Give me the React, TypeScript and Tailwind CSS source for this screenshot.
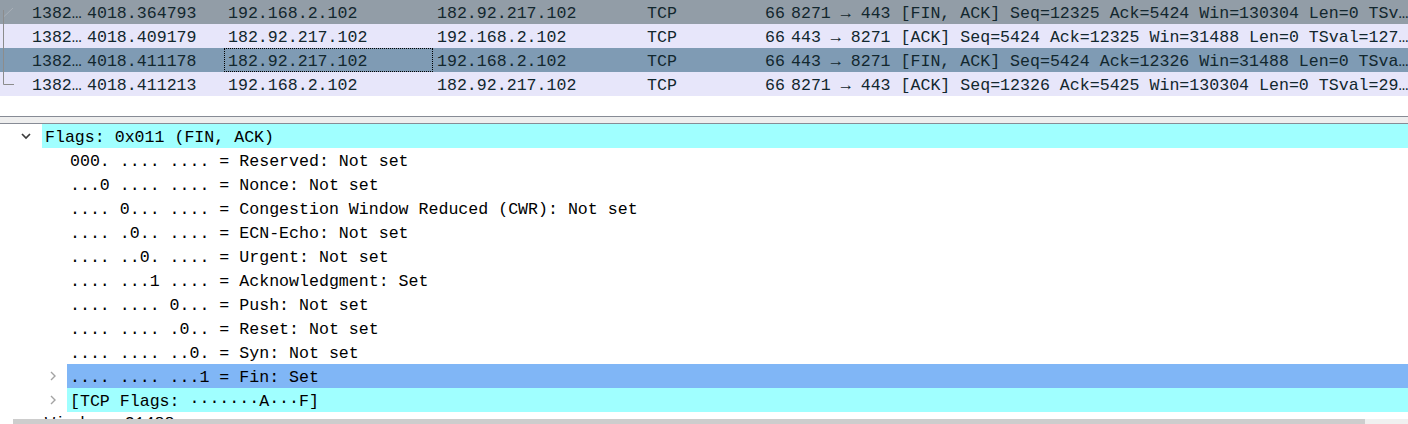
import React from "react";

// Packet list rows (bottom of a capture, TCP teardown)
interface PacketRow {
  no: string;
  time: string;
  src: string;
  dst: string;
  proto: string;
  len: string;
  info: string;
  bg: string;
  focused?: boolean;
}

const packets: PacketRow[] = [
  {
    no: "1382…",
    time: "4018.364793",
    src: "192.168.2.102",
    dst: "182.92.217.102",
    proto: "TCP",
    len: "66",
    info: "8271 → 443 [FIN, ACK] Seq=12325 Ack=5424 Win=130304 Len=0 TSv…",
    bg: "bg-[#929da7]",
  },
  {
    no: "1382…",
    time: "4018.409179",
    src: "182.92.217.102",
    dst: "192.168.2.102",
    proto: "TCP",
    len: "66",
    info: "443 → 8271 [ACK] Seq=5424 Ack=12325 Win=31488 Len=0 TSval=127…",
    bg: "bg-[#e7e6fa]",
  },
  {
    no: "1382…",
    time: "4018.411178",
    src: "182.92.217.102",
    dst: "192.168.2.102",
    proto: "TCP",
    len: "66",
    info: "443 → 8271 [FIN, ACK] Seq=5424 Ack=12326 Win=31488 Len=0 TSva…",
    bg: "bg-[#7f9bb4]",
    focused: true,
  },
  {
    no: "1382…",
    time: "4018.411213",
    src: "192.168.2.102",
    dst: "182.92.217.102",
    proto: "TCP",
    len: "66",
    info: "8271 → 443 [ACK] Seq=12326 Ack=5425 Win=130304 Len=0 TSval=29…",
    bg: "bg-[#e7e6fa]",
  },
];

// Flag bits shown under the expanded Flags node
const flagBits = [
  "000. .... .... = Reserved: Not set",
  "...0 .... .... = Nonce: Not set",
  ".... 0... .... = Congestion Window Reduced (CWR): Not set",
  ".... .0.. .... = ECN-Echo: Not set",
  ".... ..0. .... = Urgent: Not set",
  ".... ...1 .... = Acknowledgment: Set",
  ".... .... 0... = Push: Not set",
  ".... .... .0.. = Reset: Not set",
  ".... .... ..0. = Syn: Not set",
];

const font = "font-['Liberation_Mono',monospace] text-[16.6px] leading-[24px] whitespace-pre";
// one 24px line, text nudged down a little to sit like the original font
const line = `${font} h-6 pt-[2px] overflow-hidden`;

const ChevronRight = () => (
  <svg width="10" height="24" viewBox="0 0 10 24" className="shrink-0">
    <polyline points="3,8 7,12 3,16" fill="none" stroke="#a3a3a3" strokeWidth="1.4" />
  </svg>
);

const ChevronDown = () => (
  <svg width="12" height="24" viewBox="0 0 12 24" className="shrink-0">
    <polyline points="2,10 6,14 10,10" fill="none" stroke="#3c3c3c" strokeWidth="1.7" />
  </svg>
);

const PacketList = () => (
  <div className="relative h-[116px] bg-white">
    {/* related packet indicator */}
    <svg width="28" height="96" className="absolute left-0 top-0" viewBox="0 0 28 96">
      <path d="M3.5 17 L13 8" stroke="#a9b0b8" strokeWidth="1" fill="none" />
      <path d="M3.5 10 V84.5 H14" stroke="#8c8c8c" strokeWidth="1" fill="none" />
    </svg>
    {packets.map((p, i) => (
      <div key={i} className={`flex text-[#12272e] ${p.bg} ${line}`}>
        <div className="w-[28px] shrink-0" />
        <div className="w-[55px] shrink-0 pl-1 overflow-hidden">{p.no}</div>
        <div className="w-[141px] shrink-0 pl-1 overflow-hidden">{p.time}</div>
        <div
          className={`w-[209px] shrink-0 overflow-hidden ${
            p.focused ? "-mt-[2px] h-6 pl-[3px] pt-[1px] border border-dotted border-black" : "pl-1"
          }`}
        >
          {p.src}
        </div>
        <div className="w-[210px] shrink-0 pl-1 overflow-hidden">{p.dst}</div>
        <div className="w-[114px] shrink-0 pl-1 overflow-hidden">{p.proto}</div>
        <div className="w-[28px] shrink-0 text-right overflow-hidden">{p.len}</div>
        <div className="flex-1 pl-[6px] overflow-hidden">{p.info}</div>
      </div>
    ))}
  </div>
);

const Splitter = () => (
  <div className="h-2 border-y border-[#878b95] bg-[#eeeeee]" />
);

const DetailTree = () => (
  <div className="relative h-[300px] overflow-hidden bg-white text-black">
    <div className={`flex ${font} h-6`}>
      <div className="w-[42px] shrink-0 flex justify-end pr-[10px]">
        <ChevronDown />
      </div>
      <div className="flex-1 bg-[#a0ffff] pl-[3px] pt-[2px] overflow-hidden">Flags: 0x011 (FIN, ACK)</div>
    </div>
    {flagBits.map((t) => (
      <div key={t} className={`pl-[70px] ${line}`}>
        {t}
      </div>
    ))}
    <div className={`flex ${font} h-6`}>
      <div className="w-[67px] shrink-0 flex justify-end pr-[9px]">
        <ChevronRight />
      </div>
      <div className="flex-1 bg-[#80b6f6] pl-[3px] pt-[2px] overflow-hidden">.... .... ...1 = Fin: Set</div>
    </div>
    <div className={`flex ${font} h-6`}>
      <div className="w-[67px] shrink-0 flex justify-end pr-[9px]">
        <ChevronRight />
      </div>
      <div className="flex-1 bg-[#a0ffff] pl-[3px] pt-[2px] overflow-hidden">[TCP Flags: ·······A···F]</div>
    </div>
    <div className={`pl-[45px] ${font} h-6`}>Window: 31488</div>
    {/* horizontal scrollbar, clipped by the window edge */}
    <div className="absolute bottom-0 left-0 right-0 flex h-[5px]">
      <div className="w-[13px] bg-white" />
      <div className="flex-1 bg-[#cdcdcd]" />
      <div className="w-[43px] bg-[#f0f0f0]" />
    </div>
  </div>
);

export default function App() {
  return (
    <div className="w-[1408px] h-[424px] overflow-hidden bg-white">
      <PacketList />
      <Splitter />
      <DetailTree />
    </div>
  );
}
